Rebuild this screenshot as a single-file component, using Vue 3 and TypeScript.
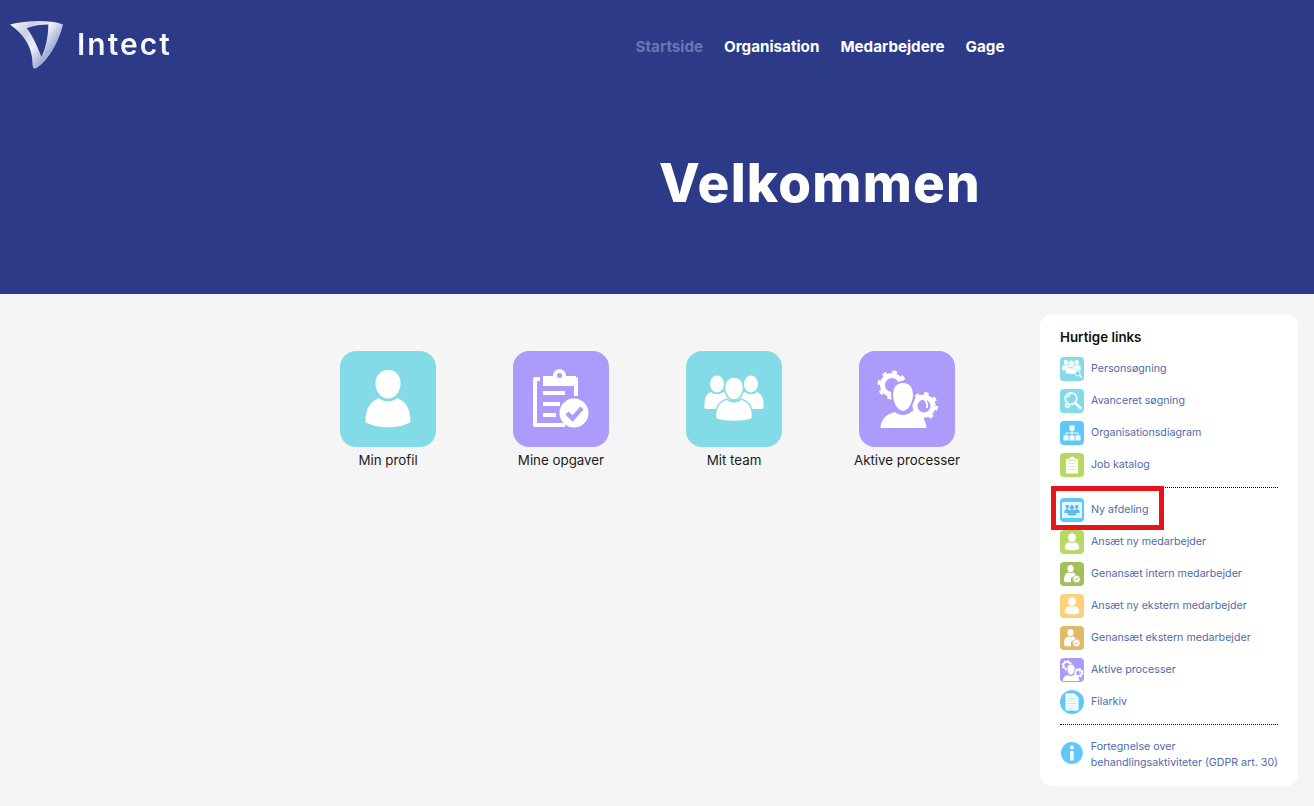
<template>
  <div class="page">
    <svg class="defs" width="0" height="0" aria-hidden="true">
      <defs>
        <linearGradient id="logo-fill" x1="0" y1="0" x2="1" y2="0.7">
          <stop offset="0" stop-color="#ffffff" />
          <stop offset="0.3" stop-color="#c9cfe6" />
          <stop offset="0.55" stop-color="#eef0f8" />
          <stop offset="0.8" stop-color="#a3aed6" />
          <stop offset="1" stop-color="#dfe3f2" />
        </linearGradient>
        <symbol id="i-person" viewBox="0 0 96 96">
          <path fill="#fff" d="M48 19c8 0 12.500 6 12.500 13 0 8-5 15.500-12.500 15.500S35.500 40 35.500 32c0-7 4.500-13 12.500-13z" />
          <path fill="#fff" d="M39 47c4 4.500 14 4.500 18 0 8 3.500 13.500 9 13.500 24-11 7-34 7-45 0C25.500 56 31 50.500 39 47z" />
        </symbol>
        <symbol id="i-person-lg" viewBox="0 0 96 96">
          <path fill="#fff" d="M48 13c10 0 15.500 7 15.500 16 0 10-6.500 19.500-15.500 19.500S32.500 39 32.500 29c0-9 5.500-16 15.500-16z" />
          <path fill="#fff" d="M36 48c5 6 19 6 24 0 11 4 17 11 17 27-13 8-45 8-58 0 0-16 6-23 17-27z" />
        </symbol>
        <symbol id="i-clipboard" viewBox="0 0 96 96">
          <path fill="none" stroke="#fff" stroke-width="4" stroke-linejoin="round" d="M27 28h-5v46h30M57 28h6v17" />
          <path fill="#fff" fill-rule="evenodd" d="M30 25h10c0-9 13-9 13 0h10v10H30zM46.500 27a2.500 2.500 0 1 0 0-5 2.500 2.500 0 0 0 0 5z" />
          <path fill="none" stroke="#fff" stroke-width="4" d="M30 42h22M30 53h17M30 64h13" />
          <circle cx="61" cy="62" r="14.500" fill="#fff" />
          <path fill="none" stroke="currentColor" stroke-width="4.500" d="M54 62l5.500 5.500L69 57" />
        </symbol>
        <symbol id="i-team" viewBox="0 0 96 96">
          <ellipse cx="31" cy="33" rx="7" ry="8.500" fill="#fff" />
          <ellipse cx="65" cy="33" rx="7" ry="8.500" fill="#fff" />
          <path fill="#fff" d="M25 41c3 3 9 3 12 0 4 1 7 3 8 6v11l-26 0 0-1c-1-1-0.500-1-0.500-3 0-8 2-11 6.500-13zM71 41c-3 3-9 3-12 0-4 1-7 3-8 6v11l26 0 0-1c1-1 0.500-1 0.500-3 0-8-2-11-6.500-13z" />
          <path fill="#fff" stroke="currentColor" stroke-width="1.500" d="M48 26c6 0 9.500 4.500 9.500 10.500 0 6.500-4 12.500-9.500 12.500s-9.500-6-9.500-12.500C38.500 30.500 42 26 48 26z" />
          <path fill="#fff" stroke="currentColor" stroke-width="1.500" d="M41 48c3 3.500 11 3.500 14 0 7.500 2.500 11.500 7 11.500 17 0 2-0.500 3-1.500 3.500-9 2.500-25 2.500-34 0-1-0.500-1.500-1.500-1.500-3.500 0-10 4-14.500 11.500-17z" />
        </symbol>
        <symbol id="i-gears" viewBox="0 0 96 96">
          <circle cx="33" cy="34" r="12.500" fill="none" stroke="#fff" stroke-width="4" stroke-dasharray="4.400 5.400" />
          <circle cx="33" cy="34" r="9.500" fill="none" stroke="#fff" stroke-width="5" />
          <circle cx="65" cy="55" r="12" fill="none" stroke="#fff" stroke-width="4" stroke-dasharray="4.200 5.200" />
          <circle cx="65" cy="55" r="9" fill="none" stroke="#fff" stroke-width="5" />
          <path fill="none" stroke="#fff" stroke-width="2" d="M33 26c6 0 10 3 12 7M62 46c4 1 7 6 6 11" />
          <path fill="#fff" stroke="currentColor" stroke-width="2" d="M44 31c7 0 11 5 11 12 0 9-5 18-11 18s-11-9-11-18c0-7 4-12 11-12z" />
          <path fill="#fff" d="M36 61c4 4 12 4 16 0 10 2.500 15 7 15.500 16h-46C22 68 27 63.500 36 61z" />
        </symbol>
        <symbol id="i-gears-sm" viewBox="14 14 66 66">
          <use href="#i-gears" width="96" height="96" />
        </symbol>
        <symbol id="i-search-team" viewBox="10 10 76 76">
          <use href="#i-team" x="-2" y="-6" width="96" height="96" />
          <circle cx="66" cy="62" r="8" fill="currentColor" stroke="#fff" stroke-width="3" />
          <path stroke="#fff" stroke-width="4" d="M72 68l8 8" />
        </symbol>
        <symbol id="i-search-gear" viewBox="0 0 96 96">
          <circle cx="44" cy="38" r="23" fill="none" stroke="#fff" stroke-width="7" />
          <path d="M60 56l22 20" stroke="#fff" stroke-width="10" stroke-linecap="round" />
          <path d="M30 36c1-8 6-13 14-14" fill="none" stroke="#fff" stroke-width="5" />
          <circle cx="30" cy="66" r="12" fill="currentColor" />
          <circle cx="30" cy="66" r="10" fill="none" stroke="#fff" stroke-width="4" stroke-dasharray="4 3" />
          <circle cx="30" cy="66" r="6.500" fill="none" stroke="#fff" stroke-width="5" />
        </symbol>
        <symbol id="i-org" viewBox="0 0 96 96">
          <path fill="#fff" d="M38 18h20v20H38zM14 58h20v20H14zM38 58h20v20H38zM62 58h20v20H62z" />
          <path fill="none" stroke="#fff" stroke-width="4" d="M48 38v20M24 58V48h48v10" />
        </symbol>
        <symbol id="i-job" viewBox="0 0 96 96">
          <path fill="#fff" d="M24 24h12v-2c0-10 24-10 24 0v2h12v58H24z" />
          <path fill="none" stroke="currentColor" stroke-width="2.500" d="M32 30h32" />
          <path fill="none" stroke="currentColor" stroke-width="3" stroke-dasharray="4 3" d="M34 42h28M34 54h28M34 66h28" />
        </symbol>
        <symbol id="i-dept" viewBox="0 0 96 96">
          <rect x="8" y="16" width="80" height="64" rx="5" fill="#e6f6fe" />
          <g fill="#5bbcf0">
            <ellipse cx="29" cy="35" rx="7" ry="8" />
            <ellipse cx="67" cy="35" rx="7" ry="8" />
            <path d="M17 60c0-10 3-15 12-16 9 1 12 6 12 16zM55 60c0-10 3-15 12-16 9 1 12 6 12 16z" />
            <ellipse cx="48" cy="38" rx="8.500" ry="10" />
            <path d="M31 68c0-14 5-20 17-21 12 1 17 7 17 21-8 3-26 3-34 0z" />
          </g>
        </symbol>
        <symbol id="i-person-check" viewBox="0 0 96 96">
          <path fill="#fff" d="M42 12c8 0 12.500 6 12.500 13.500 0 8-5 15.500-12.500 15.500s-12.500-7.500-12.500-15.500C29.500 18 34 12 42 12z" />
          <path fill="#fff" d="M33 41c4 4.500 14 4.500 18 0 8 3 13 8 14 20H44v20H22c-5-2-6-4-6-8 0-19 7-28 17-32z" />
          <circle cx="66" cy="68" r="15" fill="#fff" stroke="currentColor" stroke-width="3" />
          <path fill="none" stroke="currentColor" stroke-width="4" d="M59 68l5 5 9-10" />
        </symbol>
        <symbol id="i-file" viewBox="0 0 96 96">
          <path fill="#fff" d="M22 14h36l16 16v52H22z" />
          <path fill="none" stroke="#a8e2fc" stroke-width="3" d="M30 34h36M30 44h36M30 54h36M30 64h36M30 74h24M30 24h20" />
        </symbol>
        <symbol id="i-info" viewBox="0 0 96 96">
          <circle cx="48" cy="48" r="44" fill="#5fc8fb" />
          <circle cx="48" cy="26" r="8" fill="#fff" />
          <rect x="41" y="40" width="14" height="38" rx="2" fill="#fff" />
        </symbol>
      </defs>
    </svg>

    <header class="hero">
      <div class="top">
        <div class="brand">
          <svg class="logo" viewBox="0 0 56 50" aria-hidden="true">
            <path fill="url(#logo-fill)" fill-rule="evenodd" d="M0 4C16 0 40-1 54 4 50 21 40 39 28 48c-3 2-5 1-5-3C23 31 18 17 0 4zM17 8c6 7 11 19 15 29 4-8 7-20 7-33C32 4 24 5 17 8z" />
          </svg>
          <span class="wordmark">Intect</span>
        </div>
        <nav class="nav">
          <a v-for="item in navItems" :key="item" :class="{ active: item === 'Startside' }">{{ item }}</a>
        </nav>
      </div>
      <h1>Velkommen</h1>
    </header>

    <main class="content">
      <section class="tiles">
        <div v-for="tile in tiles" :key="tile.label" class="tile">
          <div class="tile-icon" :class="tile.tone">
            <svg width="96" height="96"><use :href="'#' + tile.icon" /></svg>
          </div>
          <span>{{ tile.label }}</span>
        </div>
      </section>

      <aside class="quick">
        <h2>Hurtige links</h2>
        <div v-for="(group, i) in linkGroups" :key="i" class="group">
          <a v-for="link in group" :key="link.label" class="link">
            <span class="link-icon" :class="{ round: link.round }" :style="{ background: link.color, color: link.color }">
              <svg width="24" height="24"><use :href="'#' + link.icon" /></svg>
            </span>
            {{ link.label }}
          </a>
        </div>
        <a class="link info">
          <svg class="info-icon" width="24" height="24"><use href="#i-info" /></svg>
          <span>Fortegnelse over<br />behandlingsaktiviteter (GDPR art. 30)</span>
        </a>
        <div class="marker"></div>
      </aside>
    </main>
  </div>
</template>

<script setup lang="ts">
interface QuickLink {
  label: string
  icon: string
  color: string
  round?: boolean
}

const navItems = ['Startside', 'Organisation', 'Medarbejdere', 'Gage']

const tiles = [
  { label: 'Min profil', icon: 'i-person', tone: 'teal' },
  { label: 'Mine opgaver', icon: 'i-clipboard', tone: 'purple' },
  { label: 'Mit team', icon: 'i-team', tone: 'teal' },
  { label: 'Aktive processer', icon: 'i-gears', tone: 'purple' }
]

const linkGroups: QuickLink[][] = [
  [
    { label: 'Personsøgning', icon: 'i-search-team', color: '#84dbe8' },
    { label: 'Avanceret søgning', icon: 'i-search-gear', color: '#84dbe8' },
    { label: 'Organisationsdiagram', icon: 'i-org', color: '#5fc8fb' },
    { label: 'Job katalog', icon: 'i-job', color: '#b9d863' }
  ],
  [
    { label: 'Ny afdeling', icon: 'i-dept', color: '#5fc8fb' },
    { label: 'Ansæt ny medarbejder', icon: 'i-person-lg', color: '#b9d863' },
    { label: 'Genansæt intern medarbejder', icon: 'i-person-check', color: '#a3c058' },
    { label: 'Ansæt ny ekstern medarbejder', icon: 'i-person-lg', color: '#fbd277' },
    { label: 'Genansæt ekstern medarbejder', icon: 'i-person-check', color: '#e4b966' },
    { label: 'Aktive processer', icon: 'i-gears-sm', color: '#ad9bfb' },
    { label: 'Filarkiv', icon: 'i-file', color: '#5fc8fb', round: true }
  ]
]
</script>

<style>
html,
body {
  margin: 0;
  background: #f5f5f5;
}
</style>

<style scoped>
.page {
  font-family: Inter, "Noto Sans", sans-serif;
  height: 806px;
  overflow: hidden;
}

.defs {
  position: absolute;
}

.hero {
  height: 294px;
  box-sizing: border-box;
  background: #2c3a87;
  color: #fff;
}

.top {
  display: grid;
  grid-template-columns: 326px 1fr;
  padding-top: 20px;
}

.brand {
  display: flex;
  align-items: flex-start;
  gap: 12px;
  padding-left: 10px;
  height: 50px;
}

.logo {
  width: 55px;
  height: 50px;
}

.wordmark {
  font-size: 30px;
  font-weight: 600;
  line-height: 48px;
  letter-spacing: 2px;
  background: linear-gradient(180deg, #c4cbe6 0%, #ffffff 45%, #eef0f9 70%, #aab5dc 100%);
  -webkit-background-clip: text;
  background-clip: text;
  color: transparent;
}

.nav {
  display: flex;
  justify-content: center;
  gap: 21px;
  height: 53px;
  font-size: 15.200px;
  font-weight: 700;
  line-height: 53px;
}

.nav .active {
  color: #6b77b3;
}

h1 {
  margin: 0;
  padding: 74px 0 0 326px;
  text-align: center;
  font-size: 53px;
  font-weight: 800;
  letter-spacing: 1.200px;
  line-height: 72px;
}

.content {
  display: flex;
  padding: 20px 16px 20px 255px;
}

.tiles {
  flex: 1;
  display: flex;
  justify-content: center;
  align-items: flex-start;
  padding-top: 37px;
}

.tile {
  width: 173px;
  display: flex;
  flex-direction: column;
  align-items: center;
  gap: 5px;
  font-size: 13.330px;
  line-height: 16px;
  color: #1c1c1c;
}

.tile-icon {
  width: 96px;
  height: 96px;
  border-radius: 16px;
}

.tile-icon svg {
  display: block;
}

.teal {
  background: #84dbe8;
  color: #84dbe8;
}

.purple {
  background: #ad9bfb;
  color: #ad9bfb;
}

.quick {
  position: relative;
  width: 258px;
  height: 472px;
  box-sizing: border-box;
  padding: 15px 20px 0;
  background: #fff;
  border-radius: 12px;
}

h2 {
  margin: 0 0 12px;
  font-size: 13.330px;
  font-weight: 600;
  line-height: 16px;
  color: #111;
}

.group {
  display: flex;
  flex-direction: column;
  gap: 8px;
  padding-bottom: 10px;
  margin-bottom: 10px;
  border-bottom: 1px dotted #000;
}

.group + .group {
  padding-bottom: 10px;
  margin-bottom: 14px;
}

.link {
  display: flex;
  align-items: center;
  gap: 7px;
  height: 24px;
  font-size: 10.670px;
  line-height: 16px;
  color: #506aad;
}

.link-icon {
  width: 24px;
  height: 24px;
  border-radius: 4px;
}

.link-icon.round {
  border-radius: 50%;
}

.link-icon svg,
.info-icon {
  display: block;
}

.info {
  height: 32px;
  white-space: nowrap;
}

.info-icon {
  margin-bottom: 4px;
}

.marker {
  position: absolute;
  left: 11px;
  top: 172px;
  width: 113px;
  height: 44px;
  box-sizing: border-box;
  border: 5px solid #e8141c;
}
</style>
